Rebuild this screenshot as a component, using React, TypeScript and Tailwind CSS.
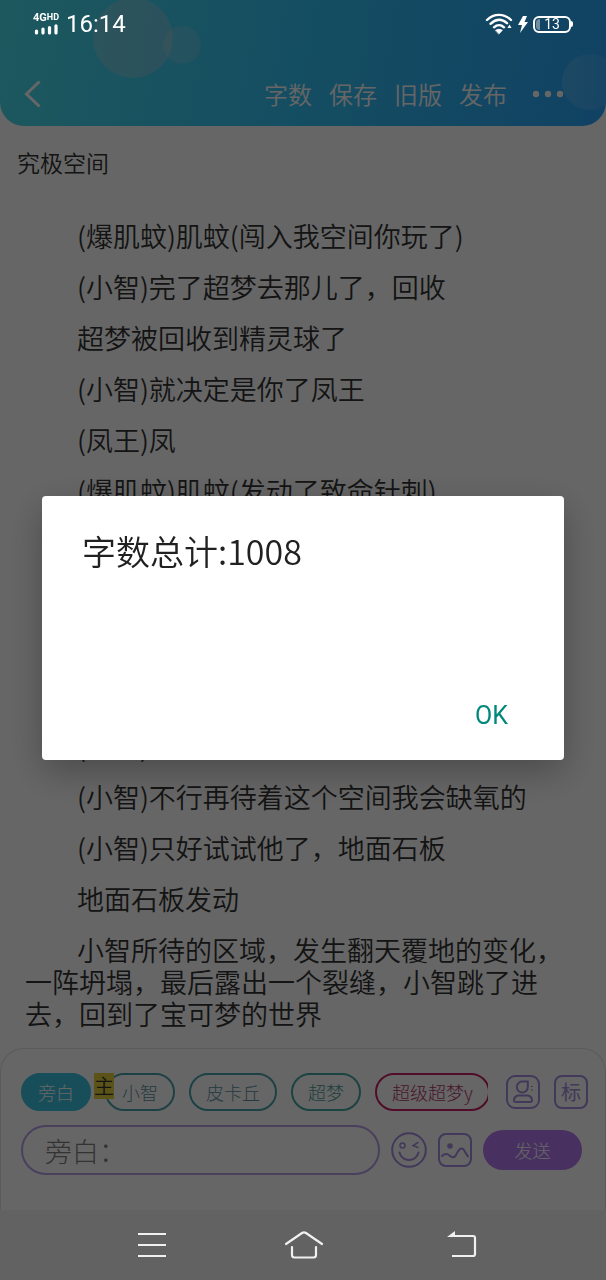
import { useState } from "react";

const actions = ["字数", "保存", "旧版", "发布"];

const lines = [
  "(爆肌蚊)肌蚊(闯入我空间你玩了)",
  "(小智)完了超梦去那儿了，回收",
  "超梦被回收到精灵球了",
  "(小智)就决定是你了凤王",
  "(凤王)凤",
  "(爆肌蚊)肌蚊(发动了致命针刺)",
  "",
  "",
  "",
  "",
  "(小智)",
  "(小智)不行再待着这个空间我会缺氧的",
  "(小智)只好试试他了，地面石板",
  "地面石板发动",
  "小智所待的区域，发生翻天覆地的变化，一阵坍塌，最后露出一个裂缝，小智跳了进去，回到了宝可梦的世界",
];

const roles = [
  { name: "旁白", style: "border-[#3ac4de] bg-[#3ac4de] text-white" },
  { name: "小智", style: "border-[#4ba3ad] text-[#5a949e]", main: true },
  { name: "皮卡丘", style: "border-[#4ba3ad] text-[#5a949e]" },
  { name: "超梦", style: "border-[#45a79f] text-[#4a9c98]" },
  { name: "超级超梦y", style: "border-[#c81e64] text-[#b43468]" },
];

function StatusBar() {
  return (
    <div className="fixed inset-x-0 top-0 z-30 flex h-12 items-center justify-between px-[33px] font-[Roboto] font-normal text-white">
      <div className="flex items-center gap-[7px]">
        <div className="flex flex-col gap-px">
          <div className="flex text-[11px] leading-[10px] font-bold">
            4G<span className="text-[9px] leading-[8px]">HD</span>
          </div>
          <svg width="26" height="11" viewBox="0 0 26 11" stroke="currentColor" strokeWidth="3.200" strokeLinecap="round">
            <path d="M3.500 7V9M10 5V9M16.500 3.500V9M23 1.800V9" />
          </svg>
        </div>
        <span className="text-2xl">16:14</span>
      </div>

      <div className="flex items-center gap-[5px]">
        <svg width="28" height="22" viewBox="0 0 28 22" fill="none" stroke="currentColor" strokeWidth="2.400" strokeLinecap="round">
          <path d="M2 7C9 .2 19 .2 26 7M5.500 10.800C11 5.800 17 5.800 22 10.200M9 14.300C12 11.500 16 11.500 19 14.300" />
          <path d="M10.500 17.200Q14 15 17.500 17.200L14 21Z" fill="currentColor" strokeWidth="0.500" />
          <path d="M24.500 11.500l2 3.500h-4z" fill="currentColor" stroke="none" />
        </svg>
        <svg width="10" height="17" viewBox="0 0 10 17" fill="currentColor">
          <path d="M5 0h4L6.500 6H10L2 17l2-8H0z" />
        </svg>
        <div className="flex items-center">
          <div className="relative flex h-[17px] w-[38px] items-center justify-center rounded-md border-2 text-sm">
            <span className="absolute inset-y-px left-px w-1 rounded-l-sm bg-white/40" />
            13
          </div>
          <span className="h-1.5 w-0.5 rounded-r bg-white" />
        </div>
      </div>
    </div>
  );
}

function Header({ onCount }: { onCount: () => void }) {
  return (
    <header className="relative overflow-hidden rounded-b-3xl bg-linear-100 from-[#4adcec] via-[#34c2f4] to-[#2ba4f8] pt-[62px] text-white">
      <span className="absolute -top-0.5 left-[93px] size-20 rounded-full bg-[#d8ccd0]/30" />
      <span className="absolute top-[26px] left-[163px] size-[38px] rounded-full bg-[#d8ccd0]/20" />
      <span className="absolute top-[54px] -right-3 size-14 rounded-full bg-linear-to-r from-white/15 to-white/5" />
      <div className="relative flex h-16 items-center justify-between pr-10 pl-6">
        <button aria-label="返回">
          <svg width="17" height="28" viewBox="0 0 17 28" fill="none" stroke="currentColor" strokeWidth="3">
            <path d="M15.500 1.500L2.500 14l13 12.500" />
          </svg>
        </button>
        <div className="flex items-center gap-[17px]">
          {actions.map((a, i) => (
            <button key={a} onClick={i === 0 ? onCount : undefined} className="text-2xl">
              {a}
            </button>
          ))}
          <button aria-label="更多" className="ml-1.5">
            <svg width="36" height="8" viewBox="0 0 36 8" fill="currentColor">
              <circle cx="6" cy="4" r="3.200" />
              <circle cx="18" cy="4" r="3.200" />
              <circle cx="30" cy="4" r="3.200" />
            </svg>
          </button>
        </div>
      </div>
    </header>
  );
}

function Composer() {
  return (
    <footer className="rounded-t-3xl border border-b-0 border-[#e2e2e2] bg-white pt-6 pb-[35px]">
      <div className="flex items-center pr-[17px] pl-5">
        <div className="-my-1 flex min-w-0 flex-1 gap-[14px] overflow-hidden py-1">
          {roles.map((r) => (
            <div key={r.name} className="relative shrink-0">
              <button className={`h-[38px] rounded-full border-2 px-[15px] text-lg leading-[34px] font-light whitespace-nowrap ${r.style}`}>
                {r.name}
              </button>
              {r.main && (
                <span className="absolute top-0 -left-[11px] bg-[#e5cf3c] text-xl leading-[26px] text-[#333]">
                  主
                </span>
              )}
            </div>
          ))}
        </div>
        <button aria-label="角色" className="ml-[18px] text-[#a58ce0]">
          <svg width="34" height="34" viewBox="0 0 34 34" fill="none" stroke="currentColor" strokeWidth="2">
            <rect x="1" y="1" width="32" height="32" rx="8" />
            <path d="M21.800 6.500H17a5.500 5.500 0 1 0 4.800 5.500z" />
            <path d="M12 20.500h10q4 1 4 5 0 1.500-2 1.500H10q-2 0-2-1.500 0-4 4-5z" />
            <path d="M25 11.500h2M25 15h2" strokeWidth="1.200" />
          </svg>
        </button>
        <button className="ml-[14px] size-[34px] rounded-lg border-2 border-[#a58ce0] text-xl leading-7 font-normal text-[#a58ce0]">
          标
        </button>
      </div>

      <div className="mt-[14px] flex items-center gap-[11px] pr-[23px] pl-5">
        <input
          aria-label="旁白"
          placeholder="旁白："
          className="h-[50px] min-w-0 flex-1 rounded-full border-2 border-[#b8a0e8] px-[22px] text-[27px] font-light text-[#333] placeholder:text-[#808080]"
        />
        <button aria-label="表情" className="text-[#a58ce0]">
          <svg width="36" height="36" viewBox="0 0 36 36" fill="none" stroke="currentColor" strokeWidth="2" strokeLinecap="round">
            <circle cx="18" cy="18" r="16.800" />
            <circle cx="11.500" cy="13.500" r="2.500" strokeWidth="1.500" />
            <path d="M27 10.500l-5 3 5 2" strokeWidth="1.500" />
            <path d="M8.500 20.500C11 30.500 25 30.500 27.500 20.500" />
          </svg>
        </button>
        <button aria-label="图片" className="text-[#a58ce0]">
          <svg width="34" height="34" viewBox="0 0 34 34" fill="none" stroke="currentColor" strokeWidth="2" strokeLinecap="round">
            <rect x="1" y="1" width="32" height="32" rx="7" />
            <circle cx="12" cy="13" r="2.800" fill="currentColor" stroke="none" />
            <path d="M4 23C7 20 9.500 20.500 11.500 22.500s5 2.500 6.500-.5c2-4 3.500-7 6-6.500s3.500 5 6 8" />
          </svg>
        </button>
        <button className="h-10 w-[99px] rounded-full bg-[#b47cf2] text-lg font-light text-white">发送</button>
      </div>
    </footer>
  );
}

function NavBar() {
  return (
    <nav className="fixed inset-x-0 bottom-0 z-30 flex h-[70px] items-center justify-around pr-[66px] pl-[70px] text-[#f0f0f0]">
      <button aria-label="菜单">
        <svg width="40" height="28" viewBox="0 0 40 28" stroke="currentColor" strokeWidth="2.200">
          <path d="M10 3h28M10 14h28M10 25h28" />
        </svg>
      </button>
      <button aria-label="主页">
        <svg width="40" height="30" viewBox="0 0 40 30" fill="none" stroke="currentColor" strokeWidth="2.200" strokeLinecap="round">
          <path d="M1 14L17 3q2-1.300 4 0l16 11" />
          <path d="M7 17v8q0 2.500 2.500 2.500h19q2.500 0 2.500-2.500v-8" />
        </svg>
      </button>
      <button aria-label="返回上级">
        <svg width="40" height="28" viewBox="0 0 40 28" fill="none" stroke="currentColor" strokeWidth="2.200">
          <path d="M8 5h23q2 0 2 2v16q0 2-2 2H10" />
          <path d="M5 6L13 0v6z" fill="currentColor" stroke="none" />
        </svg>
      </button>
    </nav>
  );
}

export default function App() {
  const [open, setOpen] = useState(true);

  return (
    <div className="flex min-h-screen flex-col bg-[#f6f6f6] pb-[70px] font-['Noto_Sans_CJK_SC',sans-serif] font-[350] text-[#333]">
      <StatusBar />
      <div className="flex flex-1 flex-col bg-white">
        <Header onCount={() => setOpen(true)} />

        <main className="flex-1">
          <h1 className="mt-5 px-[17px] text-[23px] leading-8">究极空间</h1>
          <div className="mt-[42px] flex flex-col gap-[19px] px-[25px] text-[27px] leading-8">
            {lines.map((line, i) => (
              <p key={i} className="min-h-8 indent-[52px]">
                {line}
              </p>
            ))}
          </div>
        </main>

        <Composer />
      </div>

      {open && (
        <div className="fixed inset-0 z-20 flex items-center bg-black/60 px-[42px] pb-6">
          <div
            role="dialog"
            aria-labelledby="count"
            className="flex h-[264px] w-full flex-col justify-between rounded bg-white px-10 pt-[30px] pb-[22px] shadow-[0_12px_36px_rgba(0,0,0,0.28)]"
          >
            <h2 id="count" className="text-[34px] leading-[50px] text-[#212121]">
              字数总计:1008
            </h2>
            <button
              onClick={() => setOpen(false)}
              className="self-end px-4 py-1 font-[Roboto] text-[25px] leading-9 font-normal text-[#00897b]"
            >
              OK
            </button>
          </div>
        </div>
      )}

      <NavBar />
    </div>
  );
}
